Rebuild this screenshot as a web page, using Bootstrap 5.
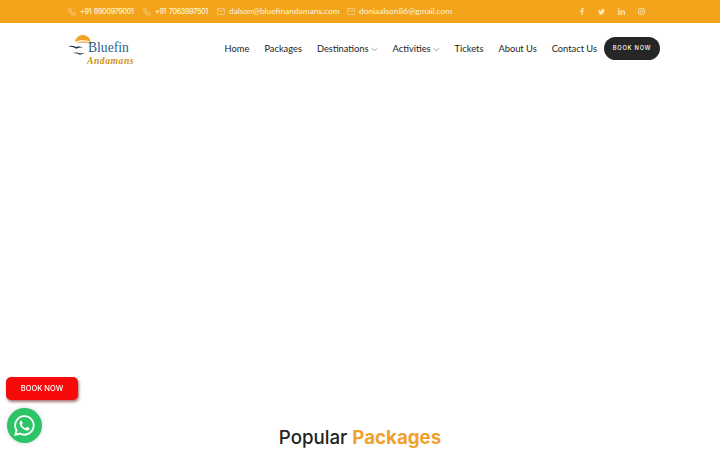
<!DOCTYPE html>
<html lang="en">
<head>
<meta charset="utf-8">
<title>Bluefin Andamans</title>
<link href="https://cdn.jsdelivr.net/npm/bootstrap@5.3.0/dist/css/bootstrap.min.css" rel="stylesheet">
<style>
html,body{height:450px;overflow:hidden;}
body{font-family:"Lato","Open Sans",sans-serif;background:#fff;color:#222;}
.topstrip{background:#f3a41b;height:23px;color:#fdf3df;font-size:8.4px;}
.wrapbox{width:592px;margin-left:68px;}
.topstrip svg{fill:none;stroke:#f8dca6;stroke-width:1;}
.contact-item{gap:4px;line-height:1;flex:none;}
.item-a{width:75px;}
.item-b{width:74px;}
.item-c{width:130px;}
.num-text{font-family:"Inter",sans-serif;font-size:7.2px;font-weight:500;letter-spacing:-.36px;word-spacing:1px;}
.social-set{gap:13px;margin-right:15px;}
.social-set svg{fill:#fbe6bf;stroke:none;display:block;}
.mainbar{height:51px;}
.logo-mark{width:66px;height:34px;margin-top:-1px;}
.logo-a{font-family:"Liberation Serif",serif;font-size:13.6px;fill:#2c5f8e;}
.logo-b{font-family:"Liberation Serif",serif;font-style:italic;font-weight:700;font-size:9.6px;fill:#cf9420;letter-spacing:.55px;}
.menu-row{font-size:9.3px;color:#1d1d1d;}
.menu-row a{color:#1d1d1d;text-decoration:none;white-space:nowrap;margin-right:15px;}
.menu-row svg{fill:none;stroke:#777;stroke-width:.8;margin-left:2px;}
.menu-row a.end-link{margin-right:7px;}
.pill-book{font-family:"Inter",sans-serif;background:#262626;color:#fff;border:0;border-radius:12px;width:56px;height:23px;font-size:5.7px;font-weight:500;letter-spacing:.8px;padding:0;}
.hero-blank{height:347px;}
.section-title{font-family:"Inter","Lato",sans-serif;font-size:18.7px;font-weight:500;color:#222;line-height:24px;margin:0;padding-top:5px;}
.section-title span{color:#f0a12c;font-weight:700;}
.float-book{font-family:"Inter",sans-serif;position:fixed;left:6px;top:377px;width:72px;height:23px;background:#f70a0a;color:#fff;border:0;border-radius:5px;font-size:7.5px;font-weight:500;padding:0;box-shadow:1px 2px 3px rgba(90,0,0,.55);}
.float-chat{position:fixed;left:7px;top:408px;width:35px;height:35px;border-radius:50%;background:#2dc468;box-shadow:0 0 4px rgba(0,0,0,.18);}
</style>
</head>
<body>
<div class="topstrip d-flex align-items-center">
  <div class="wrapbox d-flex align-items-center justify-content-between">
    <div class="d-flex align-items-center">
      <div class="contact-item item-a d-flex align-items-center"><svg width="8" height="8" viewBox="0 0 12 12"><path d="M2.2 1 4.3 1 5.2 3.6 3.9 4.8C4.6 6.300 5.800 7.500 7.300 8.200L8.500 6.900 11 7.800 11 9.900C11 10.600 10.400 11.100 9.700 11 5 10.500 1.500 7 1 2.300 .9 1.600 1.500 1 2.200 1Z"/></svg><span class="num-text">+91 8900979001</span></div>
      <div class="contact-item item-b d-flex align-items-center"><svg width="8" height="8" viewBox="0 0 12 12"><path d="M2.2 1 4.3 1 5.2 3.6 3.9 4.8C4.6 6.300 5.800 7.500 7.300 8.200L8.500 6.900 11 7.800 11 9.900C11 10.600 10.400 11.100 9.700 11 5 10.500 1.500 7 1 2.300 .9 1.600 1.500 1 2.200 1Z"/></svg><span class="num-text">+91 7063997501</span></div>
      <div class="contact-item item-c d-flex align-items-center"><svg width="8" height="7" viewBox="0 0 12 10"><rect x=".6" y=".6" width="10.800" height="8.800" rx="1"/><path d="M1 1.500 6 5.500 11 1.500"/></svg><span>dalson@bluefinandamans.com</span></div>
      <div class="contact-item d-flex align-items-center"><svg width="8" height="7" viewBox="0 0 12 10"><rect x=".6" y=".6" width="10.800" height="8.800" rx="1"/><path d="M1 1.500 6 5.500 11 1.500"/></svg><span>doniaalson86@gmail.com</span></div>
    </div>
    <div class="social-set d-flex align-items-center">
      <svg width="6" height="7" viewBox="0 0 6 10"><path d="M3.800 10V5.600H5.300L5.500 3.800H3.800V2.700C3.800 2.200 4 1.800 4.700 1.800H5.600V.2C5.400.1 4.900 0 4.300 0 3 0 2.100.8 2.100 2.400V3.800H.6V5.600H2.100V10Z"/></svg>
      <svg width="7" height="6" viewBox="0 0 12 10"><path d="M12 1.200C11.600 1.400 11.100 1.500 10.600 1.600 11.100 1.300 11.500.8 11.700.2 11.200.5 10.700.7 10.100.8 9 -.3 7.200-.3 6.200.8 5.600 1.400 5.400 2.300 5.600 3.100 3.600 3 1.800 2 .8.500 .2 1.500.5 2.900 1.500 3.600 1.100 3.600.7 3.500.4 3.300 .4 4.500 1.200 5.500 2.400 5.700 2 5.800 1.700 5.800 1.300 5.800 1.600 6.800 2.500 7.500 3.600 7.500 2.600 8.300 1.300 8.700 0 8.500 5 11.700 11 8.500 10.800 2.500 11.300 2.200 11.700 1.700 12 1.200Z"/></svg>
      <svg width="7" height="7" viewBox="0 0 10 10"><path d="M.2 3.300H2.200V10H.2ZM1.200 0C1.900 0 2.400.5 2.400 1.200S1.900 2.300 1.200 2.300 0 1.800 0 1.200.5 0 1.200 0ZM3.600 3.300H5.500V4.200C5.800 3.700 6.500 3.100 7.500 3.100 9.500 3.100 10 4.400 10 6.200V10H8V6.600C8 5.800 8 4.800 6.900 4.800S5.600 5.600 5.600 6.600V10H3.600Z"/></svg>
      <svg width="7" height="7" viewBox="0 0 10 10"><rect x=".6" y=".6" width="8.800" height="8.800" rx="2.400" fill="none" stroke="#fbe6bf" stroke-width="1.100"/><circle cx="5" cy="5" r="2" fill="none" stroke="#fbe6bf" stroke-width="1.100"/><circle cx="7.600" cy="2.400" r=".6"/></svg>
    </div>
  </div>
</div>
<nav class="mainbar d-flex align-items-center">
  <div class="wrapbox d-flex align-items-center justify-content-between">
    <svg class="logo-mark" viewBox="0 0 66 34" role="img" aria-label="Bluefin Andamans logo">
      <path d="M7 11C8 3 20 .5 23 11 18 8.500 12 8.500 7 11Z" fill="#f0a328"/>
      <path d="M8 12.500C14 9 20 10 25 13.500 19 11.500 14 11.500 8 12.500Z" fill="#e7b15a"/>
      <path d="M0 15.500C3 14.200 5.500 14.500 8 16 10.500 15.300 13 15.600 15 16.500 12.500 16.400 10.200 16.700 8.200 17.700 6 16.200 3.500 15.600 0 15.500Z" fill="#22324a"/>
      <path d="M5 22C7.500 21 10 21.300 12 22.500 14 21.900 16 22.100 17.500 22.800 15.500 22.800 13.700 23.100 12 23.900 10 22.700 7.800 22.100 5 22Z" fill="#22324a"/>
      <text class="logo-a" x="20" y="21">Bluefin</text>
      <text class="logo-b" x="19" y="33">Andamans</text>
    </svg>
    <div class="menu-row d-flex align-items-center">
      <a href="#">Home</a>
      <a href="#">Packages</a>
      <a href="#">Destinations<svg width="7" height="5" viewBox="0 0 8 5"><path d="M1 1 4 4 7 1"/></svg></a>
      <a href="#">Activities<svg width="7" height="5" viewBox="0 0 8 5"><path d="M1 1 4 4 7 1"/></svg></a>
      <a href="#">Tickets</a>
      <a href="#">About Us</a>
      <a class="end-link" href="#">Contact Us</a>
      <button class="pill-book btn" type="button">BOOK NOW</button>
    </div>
  </div>
</nav>
<div class="hero-blank"></div>
<h2 class="section-title text-center">Popular <span>Packages</span></h2>
<button class="float-book btn" type="button">BOOK NOW</button>
<a class="float-chat d-flex align-items-center justify-content-center" href="#" aria-label="WhatsApp">
  <svg width="23" height="23" viewBox="0 0 24 24"><path d="M12 2.200A9.700 9.700 0 0 0 3.700 17L2.400 21.700 7.200 20.400A9.700 9.700 0 1 0 12 2.200Z" fill="none" stroke="#fff" stroke-width="1.900"/><path d="M8.700 6.800C8.300 6.800 7.900 7 7.500 7.500 7 8.100 6.700 8.900 6.800 9.900 7 11.500 8 13.200 9.500 14.600 11.100 16.100 13 17 14.500 17.200 15.600 17.300 16.500 16.800 17 16.100 17.300 15.700 17.400 15 17.300 14.700L15 13.500C14.700 13.400 14.500 13.500 14.300 13.700L13.500 14.700C13.300 14.900 13.100 14.900 12.900 14.800 11.400 14.200 10.100 13 9.300 11.400 9.200 11.200 9.200 11 9.400 10.800L10 10C10.100 9.800 10.200 9.600 10.100 9.400L9.200 7.200C9.100 6.900 8.900 6.800 8.700 6.800Z" fill="#fff"/></svg>
</a>
<script src="https://cdn.jsdelivr.net/npm/bootstrap@5.3.0/dist/js/bootstrap.bundle.min.js"></script>
</body>
</html>
